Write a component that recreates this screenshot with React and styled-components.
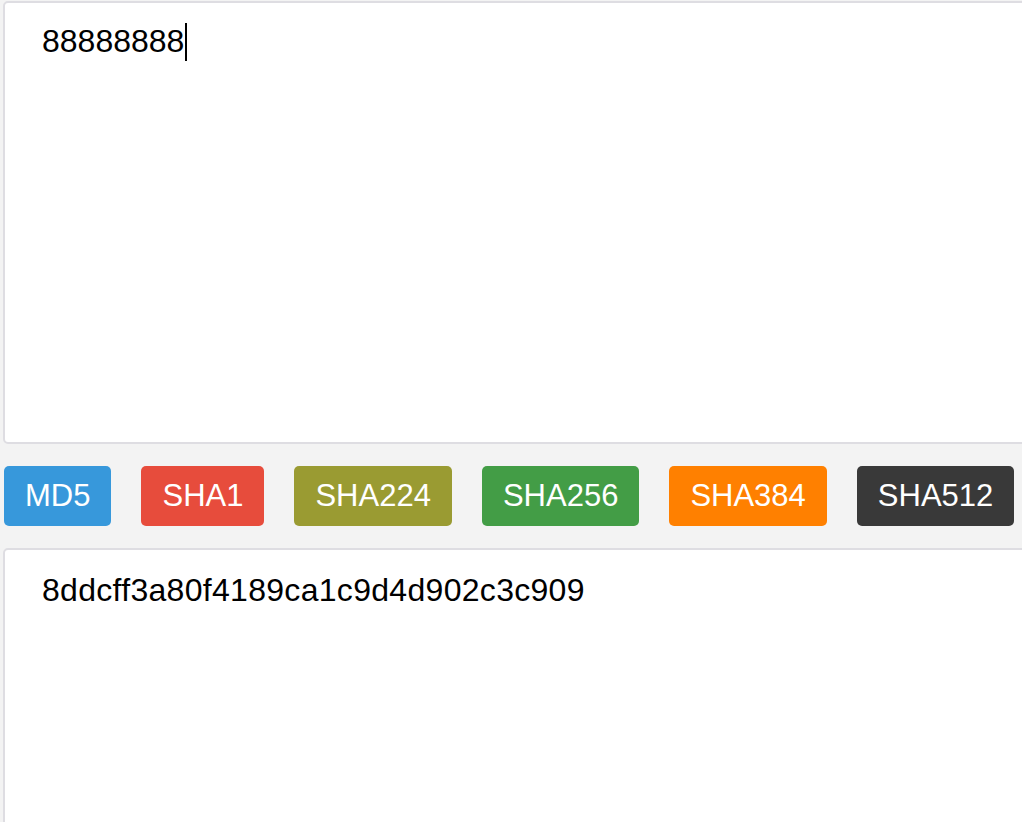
import React from 'react';
import styled, { createGlobalStyle } from 'styled-components';

const GlobalStyle = createGlobalStyle`
  html, body {
    margin: 0;
    padding: 0;
    background: #f3f3f3;
    overflow: hidden;
  }
`;

// Page wrapper
const Page = styled.div`
  display: flex;
  flex-direction: column;
  padding: 1px 0 0 3px;
  width: 1060px;
  font-family: "Liberation Sans", Arial, sans-serif;
`;

// Text boxes for input and output
const TextBox = styled.div`
  box-sizing: border-box;
  height: ${props => props.height}px;
  background: #ffffff;
  border: 2px solid #dedde2;
  border-radius: 5px;
  padding: ${props => props.padTop}px 37px 20px;
  font-size: 32px;
  line-height: 37px;
  letter-spacing: ${props => props.spacing || 0}px;
  color: #000;
`;

const Caret = styled.span`
  display: inline-block;
  width: 2px;
  height: 38px;
  background: #000;
  vertical-align: -9px;
  margin-left: 1px;
`;

// Row of hash buttons
const Toolbar = styled.div`
  display: flex;
  flex-direction: row;
  gap: 30px;
  padding: 22px 0 22px 1px;
`;

const HashButton = styled.button`
  height: 60px;
  padding: 0 21px;
  border: none;
  border-radius: 5px;
  background: ${props => props.color};
  color: #fff;
  font-family: "Liberation Sans", Arial, sans-serif;
  font-size: 31px;
  cursor: pointer;
`;

const buttons = [
  { label: 'MD5', color: '#3798db' },
  { label: 'SHA1', color: '#e74c3c' },
  { label: 'SHA224', color: '#9a9b32' },
  { label: 'SHA256', color: '#439d46' },
  { label: 'SHA384', color: '#ff8000' },
  { label: 'SHA512', color: '#393939' },
];

const App = () => {
  return (
    <Page>
      <GlobalStyle />
      <TextBox height={443} padTop={20}>88888888<Caret /></TextBox>
      <Toolbar>
        {buttons.map(b => (
          <HashButton key={b.label} color={b.color}>{b.label}</HashButton>
        ))}
      </Toolbar>
      <TextBox height={400} padTop={22} spacing={0.3}>8ddcff3a80f4189ca1c9d4d902c3c909</TextBox>
    </Page>
  );
};

export default App;
